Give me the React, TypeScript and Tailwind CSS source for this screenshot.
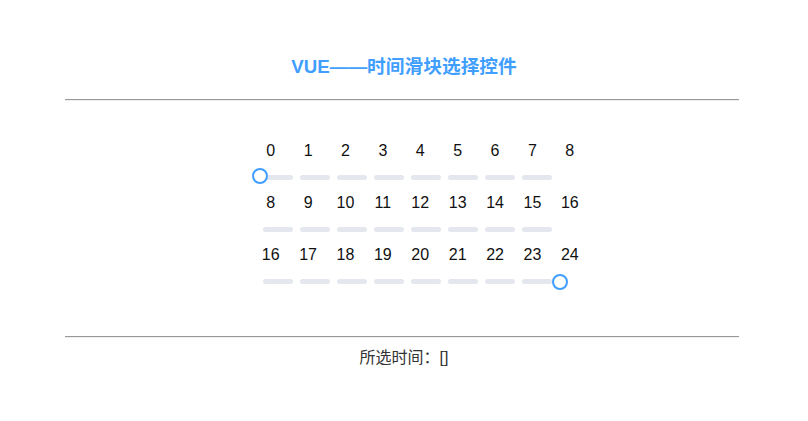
import React from "react";

// ─── Data ─────────────────────────────────────────────────────────────────────

const ROWS = [0, 8, 16];

function SliderRow({ start, first, last }: { start: number; first?: boolean; last?: boolean }) {
  const labels = Array.from({ length: 9 }, (_, i) => start + i);
  return (
    <div>
      {/* Hour labels */}
      <div className="flex h-[20px] leading-[20px] text-[16px]">
        {labels.map((n) => (
          <div key={n} className="w-[37.4px] shrink-0 text-center">
            {n}
          </div>
        ))}
      </div>

      {/* Track segments */}
      <div className="relative ml-[11px] mt-[14px] flex h-[5px] gap-[7px]">
        {labels.slice(0, 8).map((n) => (
          <div key={n} className="h-[5px] w-[30px] rounded-full bg-[#e4e7ed]" />
        ))}
        {first && (
          <div className="absolute left-[-11px] top-[-7px] h-[16px] w-[16px] rounded-full border-2 border-[#409eff] bg-white" />
        )}
        {last && (
          <div className="absolute left-[289px] top-[-5px] h-[16px] w-[16px] rounded-full border-2 border-[#409eff] bg-white" />
        )}
      </div>
    </div>
  );
}

export default function App() {
  return (
    <div className="h-[421px] w-[808px] bg-white font-['Liberation_Sans','Noto_Sans_CJK_SC',sans-serif] text-[#111]">
      {/* Title */}
      <h3 className="pt-[56px] text-center text-[18.72px] font-bold leading-[22px] text-[#409eff]">
        VUE——时间滑块选择控件
      </h3>

      <div className="mx-[65px] mt-[21px] w-[674px] border-t border-b border-t-[#9a9a9a] border-b-[#eeeeee]" />

      {/* Slider */}
      <div className="ml-[252px] mt-[40px] flex flex-col gap-[13px]">
        {ROWS.map((s, i) => (
          <SliderRow key={s} start={s} first={i === 0} last={i === ROWS.length - 1} />
        ))}
      </div>

      <div className="mx-[65px] mt-[52px] w-[674px] border-t border-b border-t-[#9a9a9a] border-b-[#eeeeee]" />

      {/* Result */}
      <div className="mt-[10px] text-center text-[16px] leading-[20px] text-[#333]">所选时间：[]</div>
    </div>
  );
}
